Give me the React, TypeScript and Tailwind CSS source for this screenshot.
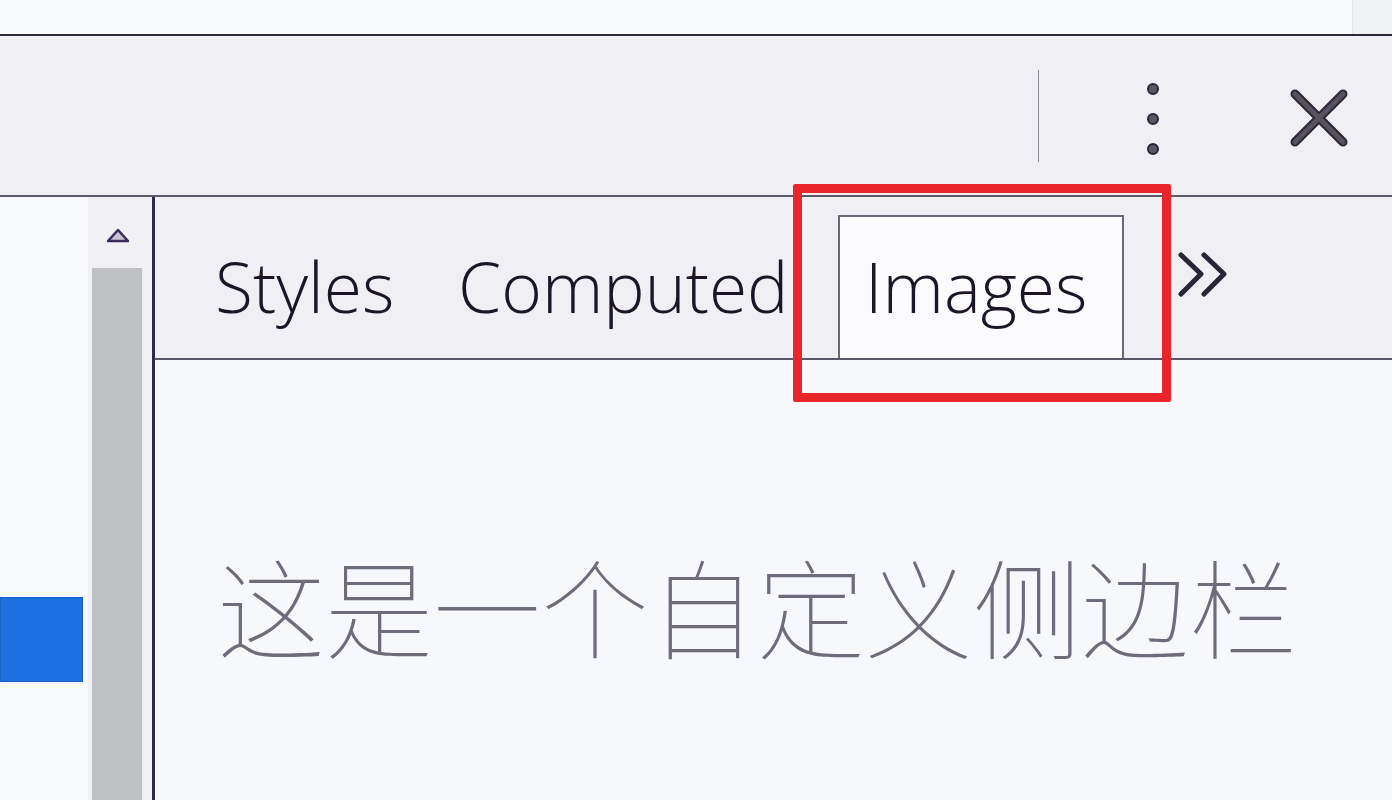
import React from 'react';

const tabFont = { fontFamily: '"Open Sans", "Noto Sans", "Liberation Sans", sans-serif' };
const cjkFont = { fontFamily: '"Noto Sans CJK SC", "Noto Sans", sans-serif' };

function KebabIcon() {
  return (
    <svg width="16" height="76" viewBox="0 0 16 76">
      {[8, 38, 68].map((cy) => (
        <circle key={cy} cx="8" cy={cy} r="5" fill="#5a5664" stroke="#2a2535" strokeWidth="2" />
      ))}
    </svg>
  );
}

function CloseIcon() {
  return (
    <svg width="58" height="58" viewBox="0 0 58 58">
      <path d="M5 5 L53 53 M53 5 L5 53" stroke="#2c2733" strokeWidth="9" strokeLinecap="round" />
      <path d="M5 5 L53 53 M53 5 L5 53" stroke="#575260" strokeWidth="5" strokeLinecap="round" />
    </svg>
  );
}

function ChevronsIcon() {
  return (
    <svg width="52" height="46" viewBox="0 0 52 46">
      <path d="M3 3 L23 22 L3 42 M26 3 L46 22 L26 42" fill="none" stroke="#2a2535" strokeWidth="5" strokeLinecap="round" strokeLinejoin="round" />
    </svg>
  );
}

export default function App() {
  return (
    <div className="relative w-[1392px] h-[800px] overflow-hidden flex flex-col bg-[#f7f8fc]">
      {/* page strip above devtools */}
      <div className="h-[34px] flex bg-[#f9fafb]">
        <div className="flex-1" />
        <div className="w-[40px] bg-[#f1f2f4] border-l border-[#e4e5e8]" />
      </div>
      <div className="h-[2px] bg-[#2c2a36]" />

      {/* devtools toolbar */}
      <div className="h-[161px] bg-[#f0f0f4] border-b-2 border-[#5b5966] flex items-center">
        <div className="flex-1" />
        <div className="w-px h-[92px] bg-[#8d8c97] mr-[106px]" />
        <div className="mr-[129px] mt-[6px]">
          <KebabIcon />
        </div>
        <div className="mr-[44px] mt-[4px]">
          <CloseIcon />
        </div>
      </div>

      <div className="flex-1 flex">
        {/* elements pane edge */}
        <div className="w-[88px] bg-[#f8f9fc] pt-[400px]">
          <div className="w-[83px] h-[85px] bg-[#1c6fde] border border-[#1660c6]" />
        </div>
        {/* scrollbar */}
        <div className="w-[64px] bg-[#f1f1f4] flex flex-col">
          <div className="h-[71px] flex items-start justify-center pt-[31px] pr-[4px]">
            <svg width="24" height="16" viewBox="0 0 24 16">
              <path d="M12 2 L22 13 L2 13 Z" fill="#cbc4d6" stroke="#3a2c55" strokeWidth="2.5" strokeLinejoin="round" />
            </svg>
          </div>
          <div className="flex-1 ml-[4px] mr-[10px] bg-[#bfc1c4]" />
        </div>
        <div className="w-[3px] bg-[#2e2a4a]" />

        {/* sidebar pane */}
        <div className="flex-1 flex flex-col">
          <div className="h-[163px] bg-[#f0f0f4] border-b-2 border-[#5a5866] flex items-end pl-[60px] text-[69.5px] leading-none font-light text-[#1c1526]" style={tabFont}>
            <div className="w-[243px] h-[143px] pt-[37px]">Styles</div>
            <div className="w-[380px] h-[143px] pt-[37px] whitespace-nowrap">Computed</div>
            <div className="w-[286px] h-[143px] border-x-2 border-t-2 border-[#6a6878] bg-[#fbfbfd] pt-[35px] pl-[25px]">Images</div>
            <div className="self-center ml-[54px] mt-[-6px]">
              <ChevronsIcon />
            </div>
          </div>
          <div className="flex-1 bg-[#f7f8fc] pt-[190px] pl-[62px]">
            <p className="text-[108px] leading-none font-thin text-[#6f6b7a] whitespace-nowrap" style={cjkFont}>
              这是一个自定义侧边栏
            </p>
          </div>
        </div>
      </div>

      {/* red annotation box */}
      <div className="absolute left-[793px] top-[184px] w-[378px] h-[218px] border-[9px] border-[#e8252a] rounded-[2px]" />
    </div>
  );
}
